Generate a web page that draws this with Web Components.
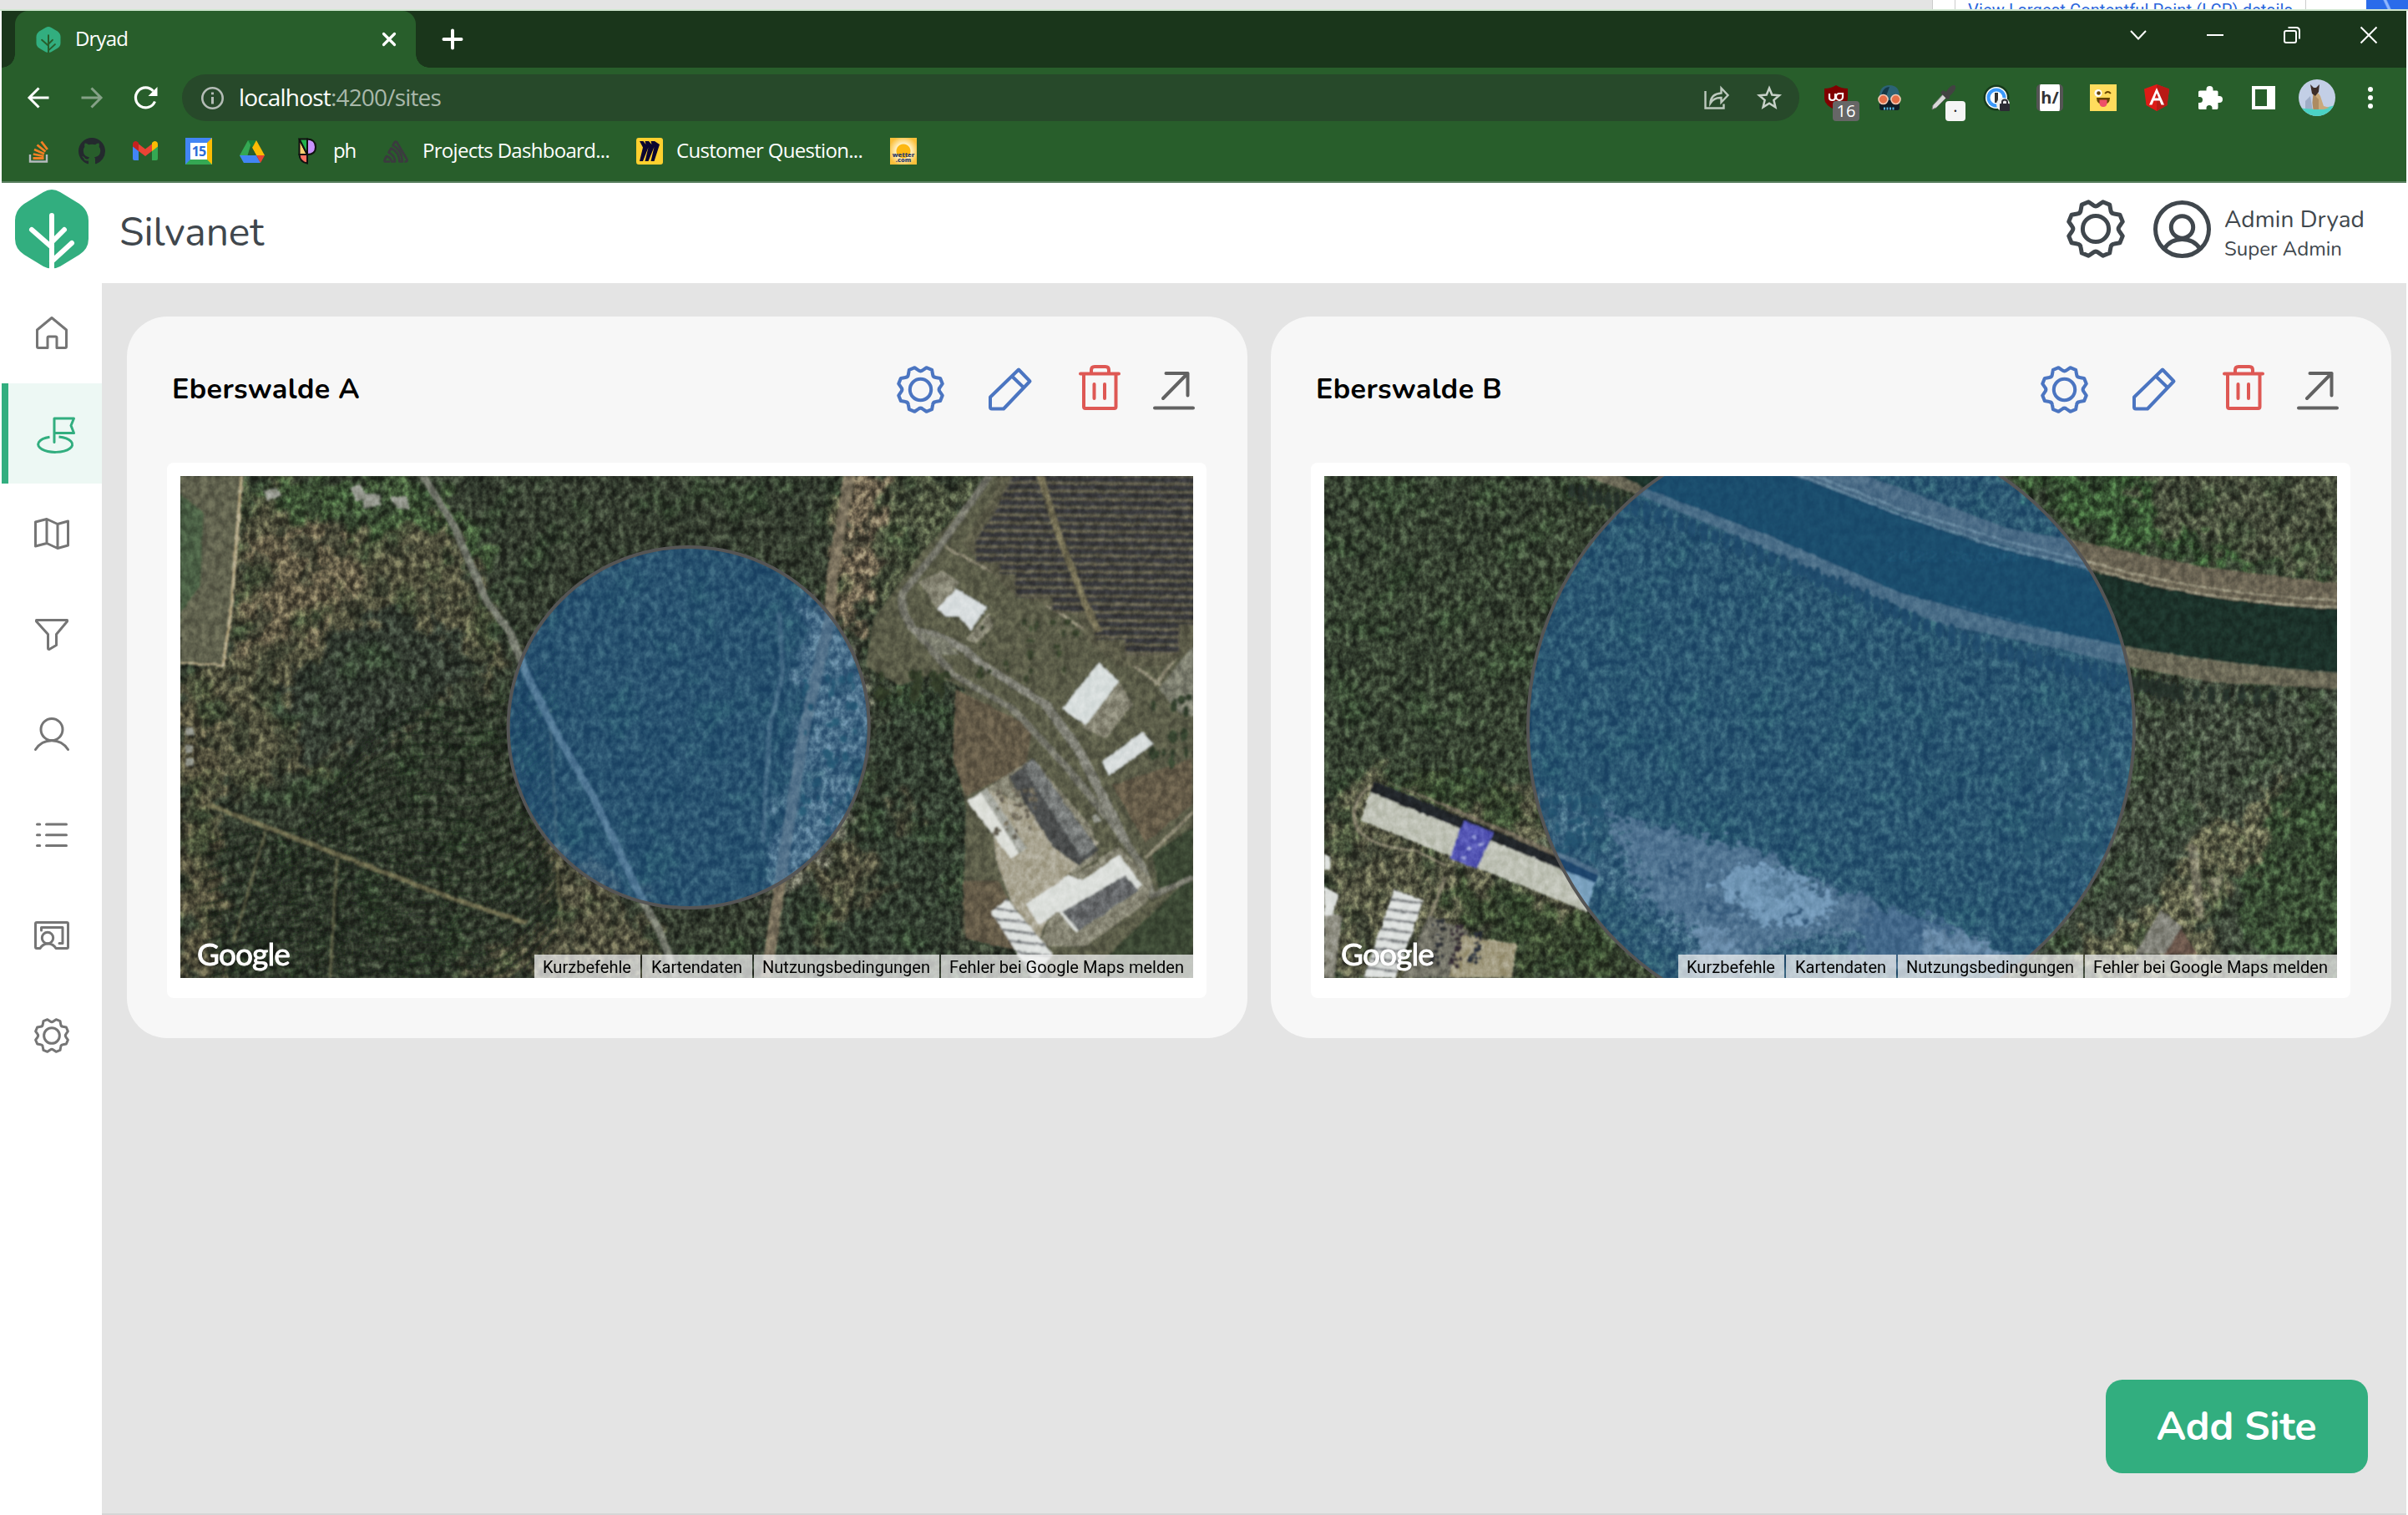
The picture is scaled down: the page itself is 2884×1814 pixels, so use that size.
<!DOCTYPE html>
<html lang="de">
<head>
<meta charset="utf-8">
<title>Dryad</title>
<style>
html,body{margin:0;height:100%;background:#fff;overflow:hidden}
body{font-family:"Open Sans","Noto Sans",sans-serif}
</style>
</head>
<body>
<app-window></app-window>
<script>
const define = (name, html, extra) => customElements.define(name, class extends HTMLElement {
  connectedCallback() {
    if (this.shadowRoot) return;
    const root = this.attachShadow({mode: 'open'});
    root.innerHTML = typeof html === 'function' ? html(this) : html;
    if (extra) extra(this, root);
  }
});

/* ---------- icons ---------- */
const gear = (() => {
  const p = (a, r) => { const t = a * Math.PI / 180; return (35 + r * Math.sin(t)).toFixed(2) + ' ' + (35 - r * Math.cos(t)).toFixed(2); };
  let d = '';
  for (let k = 0; k < 8; k++) {
    const a = 45 * k;
    d += (k ? 'L' : 'M') + p(a - 6, 28.5) + 'Q' + p(a, 26) + ' ' + p(a + 6, 28.5) + 'L' + p(a + 15, 33.4) + 'L' + p(a + 30, 33.4);
  }
  return `<g fill="none" stroke="currentColor" stroke-width="5" stroke-linejoin="round"><path d="${d}Z"/><circle cx="35" cy="35" r="15.6"/></g>`;
})();
const line = (w, s) => `<g fill="none" stroke="currentColor" stroke-width="${w}" stroke-linecap="round" stroke-linejoin="round">${s}</g>`;
const tree = c => `<path fill="#32ae7f" d="M34 3Q44-3 54 3L77 17Q88 25 88 37V59Q88 71 77 78L54 92Q44 97 34 92L11 78Q0 71 0 59V37Q0 25 11 17Z"/><g stroke="${c}" stroke-width="6" stroke-linecap="round" fill="none"><path d="M44 31V98M20 48L44 69M59 48L44 63M68 64L44 86"/></g>`;
const ICONS = {
  gear: [70, 70, gear],
  logo: [88, 94, tree('#fff')],
  favicon: [88, 94, tree('#285e2b')],
  home: [38, 39, line(3, '<path d="M1.5 16L19 1.5L36.5 16V36Q36.5 37.5 35 37.5H25V25.5Q25 24 23.500 24H15.500Q14 24 14 25.500V37.500H3Q1.500 37.500 1.500 36Z"/>')],
  flag: [46, 44, line(3, '<path d="M21 30.500V2H44.500L41 10.500L44.500 19.500H21"/><path stroke-linecap="butt" d="M15.500 24.300A20.500 9.300 0 1 0 26.500 24"/>')],
  map: [42, 38, line(3, '<path d="M1.500 5L15 1.500L28 7.500L40.500 4V33L28 36.500L15 30.500L1.500 34Z M15 1.500V30.500M28 7.500V36.500"/>')],
  filter: [40, 38, line(3, '<path d="M1.500 1.500H38.500V3L25.500 18.500V31.500L17 36.500Q15.500 36.500 15.500 35V18.500L1.500 3Z"/>')],
  user: [42, 40, line(3, '<circle cx="21" cy="14.500" r="13"/><path d="M1.500 38.500A23 23 0 0 1 40.500 38.500"/>')],
  list: [38, 30, line(3, '<path d="M1.500 2h3.200M12.500 2H36.500M1.500 14.700h3.200M12.500 14.700H36.500M1.500 27.400h3.200M12.500 27.400H36.500"/>')],
  board: [42, 34, line(3, '<path d="M7 32.500H3Q1.500 32.500 1.500 31V3Q1.500 1.500 3 1.500H39Q40.500 1.500 40.500 3V31Q40.500 32.500 39 32.500H26A11 11 0 0 0 7 32.500M8.500 11V7.500H34V26.500H30"/><circle cx="16" cy="20" r="6.700"/>')],
  account: [69, 69, line(5, '<circle cx="34.500" cy="34.500" r="32"/><circle cx="34.500" cy="32" r="13.200"/><path d="M13 58A26 26 0 0 1 56 58"/>')],
  pencil: [52, 52, line(4, '<path d="M2 35.500L36 2.500L49.500 16.500L18 49.500H4Q2 49.500 2 47.500ZM28 10.500L41.500 23.500"/>')],
  trash: [50, 54, line(4, '<path d="M2 10.500H48M15 10V6Q15 2 19 2H32Q36 2 36 6V10M6 11V50Q6 52 8 52H42.500Q44.500 52 44.500 50V11M18.500 23V40M31 23V40"/>')],
  open: [50, 46, line(4, '<path d="M2 43.500H48M12 32L41.500 2M15.500 2H41.500V28.500"/>')],
  close: [16, 16, '<path d="M1.500 1.500L14.500 14.500M14.500 1.500L1.500 14.500" stroke="#fff" stroke-width="3.200" stroke-linecap="round"/>'],
  plus: [24, 24, '<path d="M12 1.500V22.500M1.500 12H22.500" stroke="#fff" stroke-width="4" stroke-linecap="round"/>'],
  chevron: [20, 12, '<path d="M1 1L10 10.500L19 1" stroke="#fff" stroke-width="2" fill="none"/>'],
  min: [20, 20, '<path d="M0 10H20" stroke="#fff" stroke-width="2"/>'],
  restore: [20, 20, '<g stroke="#fff" stroke-width="2" fill="none"><rect x="1" y="5" width="14" height="14" rx="2"/><path d="M5.500 1H15Q19 1 19 5V14.500"/></g>'],
  xwin: [20, 20, '<path d="M.5 .5L19.500 19.500M19.500 .5L.5 19.500" stroke="#fff" stroke-width="2"/>'],
  back: [26, 26, '<path d="M25.500 13H2M13.500 1.500L2 13L13.500 24.500" stroke="#fff" stroke-width="3" fill="none"/>'],
  fwd: [26, 26, '<path d="M.5 13H24M12.500 1.500L24 13L12.500 24.500" stroke="#85a187" stroke-width="3" fill="none"/>'],
  reload: [28, 28, '<path d="M24.500 18.500A12 12 0 1 1 22.500 6" stroke="#fff" stroke-width="3.200" fill="none"/><path d="M27.500 1V12H16.500Z" fill="#fff"/>'],
  info: [27, 27, '<circle cx="13.500" cy="13.500" r="12.200" stroke="#b4bcb6" stroke-width="2.600" fill="none"/><path d="M13.500 12V20.500M13.500 6.500V9.300" stroke="#b4bcb6" stroke-width="3"/>'],
  share: [30, 28, '<g fill="none" stroke="#bdc9be" stroke-width="2.400"><path d="M1.500 6V26.500H23.500V21.500"/><path d="M7.500 20.500Q8 9.500 20.500 8.500V2.500L28.500 11L20.500 19.500V14Q12 13.500 7.500 20.500Z"/></g>'],
  star: [28, 28, '<path d="M14 2.500L17.300 10.500L26 11.200L19.400 16.900L21.400 25.300L14 20.800L6.600 25.300L8.600 16.900L2 11.200L10.700 10.500Z" fill="none" stroke="#c7d1c8" stroke-width="2.500"/>'],
  dots: [6, 28, '<g fill="#fff"><circle cx="3" cy="4" r="3"/><circle cx="3" cy="14" r="3"/><circle cx="3" cy="24" r="3"/></g>'],
  so: [32, 32, '<path d="M2 20V28.500H22V20" fill="none" stroke="#b5babd" stroke-width="2.400"/><g stroke="#f48024" stroke-width="2.800"><path d="M5.500 24.500H18.500M5.800 19.500L18.500 22M7 14L19 19.200M10.500 8.500L20.500 16.500M15.500 4.500L22.800 14"/></g>'],
  github: [16, 16, '<path fill="#24292e" d="M8 0C3.580 0 0 3.580 0 8c0 3.540 2.290 6.530 5.470 7.590.4.070.55-.17.55-.38 0-.19-.01-.82-.01-1.490-2.010.37-2.530-.49-2.690-.94-.09-.23-.48-.94-.82-1.130-.28-.15-.68-.52-.01-.53.63-.01 1.080.58 1.230.82.72 1.210 1.870.87 2.330.66.07-.52.28-.87.51-1.070-1.780-.2-3.640-.89-3.640-3.950 0-.87.31-1.590.82-2.150-.08-.2-.36-1.020.08-2.120 0 0 .67-.21 2.200.82.64-.18 1.320-.27 2-.27s1.360.09 2 .27c1.530-1.040 2.200-.82 2.200-.82.44 1.100.16 1.920.08 2.120.51.56.82 1.270.82 2.150 0 3.070-1.870 3.750-3.650 3.950.29.25.54.73.54 1.480 0 1.070-.01 1.930-.01 2.200 0 .21.15.46.55.38A8.010 8.010 0 0 0 16 8c0-4.420-3.580-8-8-8z"/>'],
  gmail: [30, 24, '<path fill="#4285f4" d="M0 5V21Q0 23 2 23H7V10Z"/><path fill="#34a853" d="M30 5V21Q30 23 28 23H23V10Z"/><path fill="#ea4335" d="M6.500 3L15 9.500L23.500 3V11.500L15 18L6.500 11.500Z"/><path fill="#c5221f" d="M0 4Q0 0 4 0Q5.500 .5 7 2V12L0 6.500Z"/><path fill="#fbbc04" d="M30 4Q30 0 26 0Q24.500 .5 23 2V12L30 6.500Z"/>'],
  drive: [30, 27, '<path fill="#34a853" d="M10 0H15L9.500 18L5 27L0 18Z"/><path fill="#188038" d="M10 0H20L15 9Z"/><path fill="#fbbc04" d="M20 0L30 18H20L15 9Z"/><path fill="#4285f4" d="M0 18H20L25 27H5Z"/><path fill="#ea4335" d="M20 18H30L25 27Z"/><path fill="#285e2b" d="M15 9L20 18H10Z"/>'],
  ph: [22, 32, '<g stroke="#111" stroke-width="2"><path fill="#ffd072" d="M1.500 1.500V20H11Z"/><path fill="#22b14c" d="M1.500 1.500H11V20Z"/><path fill="#c893fd" d="M11 1.500Q21 2 21 11T11 20Z"/><path fill="#ff7262" d="M1.500 20H11V30.500Q2 29 1.500 20Z"/></g>'],
  sentry: [30, 27, '<g fill="none" stroke="#3b3a3f" stroke-width="2.600" stroke-linejoin="round"><path d="M8 25.500H2Q1 24.500 2 22.500L4 19Q9.500 21 10 25.500H14Q14 18 6.500 14.500L9.500 9.500Q19 14 19.500 25.500H23Q22 11 11.500 6L13.500 2.500Q15 1 16.500 2.500L28.500 23Q29 25.500 27 25.500H25.500"/></g>'],
  miro: [32, 32, '<rect width="32" height="32" rx="3" fill="#ffd02f"/><path fill="#0b0530" d="M4 4H8.500L11.500 8L10.500 4H15L18.500 8L17.500 4H22L28 8L21.500 28H17.500L21.500 11L14.500 28H10.500L14.500 11.500L8 28H4L8 11.500Z"/>'],
  onepw: [32, 32, '<circle cx="16" cy="16" r="15.500" fill="#173b1c"/><circle cx="16" cy="16" r="13" fill="#fff"/><circle cx="16" cy="16" r="9.500" fill="none" stroke="#3b99fc" stroke-width="4"/><rect x="14" y="10" width="4" height="12" fill="#333"/><circle cx="24" cy="24" r="8" fill="#eee"/><rect x="20" y="23" width="12" height="9" rx="1" fill="#2b2b33"/><path d="M23 23V21Q23 18.500 26 18.500T29 21V23" fill="none" stroke="#2b2b33" stroke-width="2"/>'],
  goggles: [32, 32, '<path d="M4 15Q4 1 16 1T28 15V20H4Z" fill="#2c6375"/><path d="M7 10Q10 3 16 3L12 14H6Z" fill="#153947"/><rect x="4" y="19" width="24" height="12" rx="3" fill="#101c28"/><path d="M9 29h14" stroke="#57b6df" stroke-width="3" stroke-dasharray="2 1.500"/><g fill="#e56f48" stroke="#f3c9b4" stroke-width="1.600"><circle cx="8.500" cy="18" r="5.500"/><circle cx="23.500" cy="18" r="5.500"/></g>'],
  picker: [32, 32, '<path d="M4 25L18 10L22 14L8 28L3 30Z" fill="#d8d8d8" stroke="#777"/><path d="M16 7L20 9Q25 0 30 1Q34 5 24 14L24 17L21 18L13 10Z" fill="#424242"/>'],
  angular: [32, 32, '<path d="M16 0L31 5.500L28.500 25L16 32L3.500 25L1 5.500Z" fill="#dd1b16"/><path d="M16 0V32L28.500 25L31 5.500Z" fill="#b81a15"/><path d="M16 4L7 24.500H10.500L12.500 19.500H19.500L21.500 24.500H25ZM16 10.500L18.400 16.500H13.600Z" fill="#fff" fill-rule="evenodd"/>'],
  puzzle: [30, 30, '<path fill="#fff" d="M10.500 5A4 4 0 0 1 18.500 5V6.500H23Q24.500 6.500 24.500 8V13H26A4 4 0 0 1 26 21H24.500V27Q24.500 29 23 29H17.500V27.500A3.500 3.500 0 0 0 10.500 27.500V29H3Q1 29 1 27.500V21H2.500A3.500 3.500 0 0 0 2.500 14H1V8Q1 6.500 3 6.500H10.500Z"/>'],
  panel: [28, 28, '<path fill="#fff" fill-rule="evenodd" d="M0 0H28V28H0ZM4 4V24H18V4Z"/>'],
  wink: [32, 32, '<rect width="32" height="32" fill="#ffdc5d"/><circle cx="10" cy="10.500" r="4.500" fill="#fff"/><circle cx="10.500" cy="10.500" r="2.300" fill="#664500"/><path d="M18 11Q21.500 7 25 11" fill="none" stroke="#664500" stroke-width="1.800"/><path d="M8 16H24Q24 24 16 24T8 16Z" fill="#664500"/><path d="M11.500 18.500H20.500V23Q20 27 16 27T11.500 23Z" fill="#ee4e68"/>'],
  dog: [44, 44, '<defs><clipPath id="c"><circle cx="22" cy="22" r="22"/></clipPath></defs><g clip-path="url(#c)"><rect width="44" height="44" fill="#c3cfe6"/><path d="M8 44V26L14 20L18 44Z" fill="#9eacc6"/><path d="M0 34Q20 38 44 31V44H0Z" fill="#4bd2c5"/><path d="M17 14Q23 14 26 20L30 32L37 34L30 36H17Z" fill="#c9a97b"/><path d="M18 18Q15 28 18 36H24V24Z" fill="#ad8b61"/><path d="M14 6L18 10H21L25 6L24 15L20 20L16 17Z" fill="#3d2d28"/></g>'],
};
define('ui-icon', h => {
  const [w, ht, s] = ICONS[h.getAttribute('name')];
  const width = +(h.getAttribute('w') || w), height = +(h.getAttribute('h') || ht * width / w);
  return `<style>:host{display:block;flex:none;width:${width}px;height:${height}px}svg{display:block;overflow:visible}</style>
  <svg width="${width}" height="${height}" viewBox="0 0 ${w} ${ht}">${s}</svg>`;
});

/* ---------- browser chrome ---------- */
define('tab-strip', `<style>
:host{display:flex;height:68px;background:#1a361b;color:#fff}
.tab{position:relative;display:flex;align-items:center;box-sizing:border-box;width:480px;height:68px;margin-left:16px;padding:0 24px 0 25px;background:#285e2b;border-radius:16px 16px 0 0;font-size:24px}
.tab:before,.tab:after{content:"";position:absolute;bottom:0;width:16px;height:16px;background:radial-gradient(circle at 0 0,transparent 15.500px,#285e2b 16px)}
.tab:before{left:-16px}.tab:after{right:-16px;transform:scaleX(-1)}
fit-text{margin:-2px auto 0 18px;line-height:34px}
.new{margin:22px auto 0 32px}
.win{display:flex;align-items:center;gap:72px;height:58px;margin-right:35px}
</style><div class="tab"><ui-icon name="favicon" w="30" h="31"></ui-icon><fit-text w="62">Dryad</fit-text><ui-icon name="close"></ui-icon></div>
<ui-icon class="new" name="plus"></ui-icon>
<div class="win"><ui-icon name="chevron"></ui-icon><ui-icon name="min"></ui-icon><ui-icon name="restore"></ui-icon><ui-icon name="xwin"></ui-icon></div>`);

define('ext-button', `<style>
:host{position:relative;display:flex;align-items:center;justify-content:center;width:32px;height:32px;flex:none}
</style><slot></slot>`);

define('address-bar', `<style>
:host{display:flex;align-items:center;height:56px;color:#fff;padding:0 0 0 31px;margin-top:8px}
.nav{display:flex;gap:38px;align-items:center;width:185px;flex:none}
.omni{display:flex;flex:none;align-items:center;box-sizing:border-box;width:1937px;height:56px;border-radius:28px;background:#27492a;padding:0 22px 0 23px;font-size:28px}
.omni fit-text{margin:-2px auto 0 19px;line-height:40px}
.dim{color:#a9b8aa}
.omni ui-icon+ui-icon{margin-left:34px}
.ext{display:flex;flex:none;align-items:center;gap:32px;margin-left:28px}
.badge{position:absolute;left:12px;top:20px;width:32px;height:24px;border-radius:4px;background:#666;color:#fff;font-size:20px;line-height:24px;text-align:center}
.badge.w{left:19px;width:24px;background:#f5f5f5;color:#222}
.ub{width:28px;height:30px;display:block}
.hy{box-sizing:border-box;width:32px;height:32px;border:solid #555;border-width:0 4px;border-radius:5px;background:#fff;color:#333;font-weight:700;font-size:20px;line-height:31px;text-align:center}
.av{margin:0 7px 0 -6px}
</style>
<div class="nav"><ui-icon name="back"></ui-icon><ui-icon name="fwd"></ui-icon><ui-icon name="reload"></ui-icon></div>
<div class="omni"><ui-icon name="info"></ui-icon><fit-text w="241">localhost<span class="dim">:4200/sites</span></fit-text><ui-icon name="share"></ui-icon><ui-icon name="star"></ui-icon></div>
<div class="ext">
<ext-button><svg class="ub" viewBox="0 0 28 30"><path d="M14 0Q20 4 28 4V16Q28 24 14 30Q0 24 0 16V4Q8 4 14 0Z" fill="#800000"/><path d="M6 10V15Q6 18 9.500 18T13 15V10M22 14A4 4 0 1 1 18 10H22Z" fill="none" stroke="#fff" stroke-width="2.200"/></svg><span class="badge">16</span></ext-button>
<ext-button><ui-icon name="goggles"></ui-icon></ext-button>
<ext-button><ui-icon name="picker"></ui-icon><span class="badge w">·</span></ext-button>
<ext-button><ui-icon name="onepw"></ui-icon></ext-button>
<ext-button><span class="hy">h/</span></ext-button>
<ext-button><ui-icon name="wink"></ui-icon></ext-button>
<ext-button><ui-icon name="angular"></ui-icon></ext-button>
<ext-button><ui-icon name="puzzle"></ui-icon></ext-button>
<ext-button><ui-icon name="panel"></ui-icon></ext-button>
<ui-icon class="av" name="dog"></ui-icon><ui-icon name="dots"></ui-icon>
</div>`);

define('bookmark-bar', `<style>
:host{display:flex;align-items:center;height:32px;margin-top:20px;padding-left:32px;color:#fff;font-size:24px}
fit-text{margin-top:-2px;line-height:34px}
.cal{box-sizing:border-box;width:32px;height:32px;border:6px solid;border-color:#4285f4 #fbbc04 #34a853 #4285f4;background:#fff;color:#2b6cd8;font-size:16px;font-weight:700;line-height:20px;text-align:center;letter-spacing:-1px}
.wet{width:32px;height:32px;box-sizing:border-box;padding-top:17px;background:radial-gradient(circle at 50% 50%,#fdb813 0 8px,#fff1c4 9px,#fbbf3a 18px);color:#34436b;font-size:7.500px;font-weight:800;line-height:6px;text-align:center}
</style>
<ui-icon name="so"></ui-icon>
<ui-icon name="github" w="32" style="margin-left:28px"></ui-icon>
<ui-icon name="gmail" style="margin-left:33px"></ui-icon>
<div class="cal" style="margin-left:33px">15</div>
<ui-icon name="drive" style="margin-left:33px"></ui-icon>
<ui-icon name="ph" style="margin-left:40px"></ui-icon><fit-text w="26" style="margin-left:21px">ph</fit-text>
<ui-icon name="sentry" style="margin-left:33px"></ui-icon><fit-text w="223" style="margin-left:18px">Projects Dashboard...</fit-text>
<ui-icon name="miro" style="margin-left:32px"></ui-icon><fit-text w="222" style="margin-left:17px">Customer Question...</fit-text>
<div class="wet" style="margin-left:33px">wetter<br>.com</div>`);

/* ---------- application ---------- */
define('app-header', `<style>
:host{display:flex;align-items:center;height:120px;box-sizing:border-box;background:#fff;color:#40474d;font-family:Nunito,Lato,sans-serif;padding:0 53px 0 16px}
.t{font-size:48px;line-height:60px;margin:-2px auto 0 38px}
.logo{margin-top:-10px}
.acc{margin:-10px 17px 0 34px}
.g{margin-top:-10px}
.who{display:flex;flex-direction:column;width:166px;margin-top:2px}
.n{font-size:28px;line-height:36px}.r{font-size:24px;line-height:34px}
</style><ui-icon class="logo" name="logo"></ui-icon><fit-text class="t" w="172">Silvanet</fit-text>
<ui-icon class="g" name="gear"></ui-icon><ui-icon class="acc" name="account"></ui-icon>
<div class="who"><fit-text class="n" w="167">Admin Dryad</fit-text><fit-text class="r" w="140">Super Admin</fit-text></div>`);

define('nav-item', h => `<style>
:host{display:flex;align-items:center;justify-content:center;box-sizing:border-box;height:120px;color:#757575;padding-bottom:1px}
:host([low]){padding:2px 0 0}
:host([active]){background:#edf8f4;color:#32ae7f;border-left:8px solid #32ae7f;padding:4px 0 0 2px}
</style><ui-icon name="${h.getAttribute('icon')}" w="${h.getAttribute('w')}"></ui-icon>`);

define('side-nav', `<style>:host{display:flex;flex-direction:column;width:120px;background:#fff;flex:none}</style>
<nav-item icon="home" w="38"></nav-item><nav-item icon="flag" w="46" active></nav-item><nav-item icon="map" w="42"></nav-item><nav-item icon="filter" w="40" low></nav-item><nav-item icon="user" w="42"></nav-item><nav-item icon="list" w="38" low></nav-item><nav-item icon="board" w="42" low></nav-item><nav-item icon="gear" w="42" low></nav-item>`);

/* Aerial scenes are authored in stretched units and scaled into a 1213x601 view. */
const DEFS = `<defs>
<filter id="fine" x="0" y="0" width="100%" height="100%" color-interpolation-filters="sRGB"><feTurbulence type="fractalNoise" baseFrequency=".12 .1" numOctaves="3" seed="4"/><feColorMatrix values="1.9 0 0 0 -.5  1.9 0 0 0 -.49  1.9 0 0 0 -.49  0 0 0 0 1"/></filter>
<filter id="coarse" x="0" y="0" width="100%" height="100%" color-interpolation-filters="sRGB"><feTurbulence type="fractalNoise" baseFrequency=".035 .03" numOctaves="5" seed="9"/><feColorMatrix values="0 0 0 0 .15  0 0 0 0 .18  0 0 0 0 .14  7 0 0 0 -3.600"/></filter>
<filter id="green" x="0" y="0" width="100%" height="100%" color-interpolation-filters="sRGB"><feTurbulence type="fractalNoise" baseFrequency=".02" numOctaves="5" seed="22"/><feColorMatrix values="0 0 0 0 .22  0 0 0 0 .33  0 0 0 0 .2  0 5 0 0 -2.800"/></filter>
<filter id="rough" x="-5%" y="-5%" width="110%" height="110%"><feTurbulence type="fractalNoise" baseFrequency=".04" numOctaves="5" seed="2"/><feDisplacementMap in="SourceGraphic" scale="80" xChannelSelector="R" yChannelSelector="G"/><feGaussianBlur stdDeviation="2"/></filter>
<filter id="edge" x="-5%" y="-5%" width="110%" height="110%"><feTurbulence type="fractalNoise" baseFrequency=".09" numOctaves="2" seed="7"/><feDisplacementMap in="SourceGraphic" scale="3" xChannelSelector="R" yChannelSelector="G"/><feGaussianBlur stdDeviation=".8"/></filter>
<filter id="crumble" x="-5%" y="-5%" width="110%" height="110%"><feTurbulence type="fractalNoise" baseFrequency=".06" numOctaves="4" seed="12"/><feDisplacementMap in="SourceGraphic" scale="80" xChannelSelector="R" yChannelSelector="G"/><feGaussianBlur stdDeviation="1"/></filter>
<pattern id="pv" width="400" height="21" patternUnits="userSpaceOnUse" patternTransform="rotate(1)"><rect width="400" height="21" fill="#66624f"/><rect width="400" height="14" fill="#38393b"/></pattern>
<pattern id="hall" width="40" height="26" patternUnits="userSpaceOnUse" patternTransform="rotate(12)"><rect width="40" height="26" fill="#e0e3e1"/><rect width="40" height="7" fill="#85888a"/></pattern>
</defs>`;
const rows = () => { let s = ''; for (let i = 0; i < 24; i++) { const y = 560 + i * 32; s += `<path d="M${Math.max(90, 270 - i * 14)} ${y + 240}Q${330} ${y + 60} ${420} ${y + 90}T${585} ${y - 60}"/>`; } return s; };
const rows2 = () => { let s = ''; for (let i = 0; i < 13; i++) { const y = 980 + i * 32; s += `<path d="M60 ${y + 20}Q170 ${y - 40} 260 ${y + 10}T430 ${y + 40}"/>`; } return s; };
const dots = (n, x0, y0, w, h, c, rx, ry) => { let s = '', r = 17; const f = () => (r = (r * 16807) % 2147483647) / 2147483647; f(); f(); for (let i = 0; i < n; i++) s += `<ellipse cx="${(x0 + f() * w).toFixed()}" cy="${(y0 + f() * h).toFixed()}" rx="${(rx * (.6 + f())).toFixed(1)}" ry="${(ry * (.6 + f())).toFixed(1)}"/>`; return `<g fill="${c}">${s}</g>`; };
const tex = (f, o, m) => `<rect width="1213" height="601" filter="url(#${f})" opacity="${o}" style="mix-blend-mode:${m || 'normal'}"/>`;

const SCENES = {
a: {ox: 20, r: 216, cx: 608.700,
  land: `<rect x="-50" y="-50" width="1700" height="1500" fill="#374132"/>
  <path fill="#575541" d="M110 44H385L480 370L510 560L430 600L330 760L120 860L20 900V550L85 545Z"/>
  <path fill="#384134" d="M250 470L350 390L450 480L490 560L400 620L330 760L200 790L170 600Z"/>
  <path fill="#675e49" d="M130 200L260 190L290 330L240 450L110 500Z"/>
  <path fill="#425839" d="M120 60L180 150L280 190L420 170L470 300L500 250L390 44H250Z"/>
  <path fill="#54513e" d="M20 600H75L80 1352H20Z"/>
  <path fill="#545240" d="M560 950L700 1150L760 1352H420L590 1200Z"/>
  <path fill="#6f6f60" d="M960 360L1000 420L1060 600L1010 980L900 1180L925 900L960 660Z"/>
  <path fill="#756853" d="M1015 44H1090L1060 350L1030 440L990 380Z"/>
  <path fill="#50573f" d="M1085 44H1240L1140 300L1060 420Z"/>
  <path fill="#354030" d="M1060 720L1120 600L1190 590L1180 760L1200 900L1190 1352H880L950 1100L1050 950Z"/>
  <path fill="#55523f" d="M960 1050L1040 1000L1080 1100L1000 1250ZM1080 900L1120 880L1130 1000Z"/>`,
  built: `<g filter="url(#edge)"><path fill="#5b5d48" d="M1240 44H1600V1400H1380L1330 1352L1250 1180L1195 1240L1200 900L1180 760L1200 600L1150 560L1100 590L1050 540L1060 420L1130 250Z"/>
  <path fill="#665b48" d="M1185 600L1300 700L1290 800L1200 880L1180 780ZM1195 1100H1250L1300 1290L1200 1250ZM1420 850L1540 780V900L1470 1000Z"/>
  <path fill="#3d4935" d="M1440 1250L1542 1080V1352H1380ZM1480 1030L1542 960V1110L1490 1120Z"/></g>
  <path fill="#62644f" d="M20 44H112L96 400L84 545L20 535Z"/><path fill="#436040" opacity=".7" d="M20 90L55 140L50 330L20 400Z"/>
  <g fill="none" stroke-linejoin="round"><g stroke="#1b251a" opacity=".7" stroke-width="6">${rows()}${rows2()}</g>
  <g stroke="#b9ad8c" stroke-width="5"><path d="M112 44L96 400L84 540M20 532Q60 532 84 540"/></g>
  <g stroke="#6f6d50" stroke-width="6"><path d="M60 900L180 980L300 1060L420 1140L540 1210" stroke-width="11"/><path opacity=".7" d="M150 960L100 1260M255 1040L245 1352M575 650L590 1180" stroke-width="4"/></g>
  <path stroke="#787b70" stroke-width="12" d="M385 44L430 170L480 370L515 450L540 560L580 700L640 880L700 1100L745 1250L765 1352"/>
  <path stroke="#7d735e" stroke-width="17" d="M1025 44L1000 300L995 420L958 700L930 1000L900 1352"/>
  <path stroke="#737362" stroke-width="7" opacity=".7" d="M920 400L925 560L905 700L895 1000"/>
  <path stroke="#77776c" stroke-width="12" d="M1235 44L1160 230L1105 350Q1100 400 1125 450L1180 560L1270 650L1350 800L1420 950L1465 1060L1480 1140L1542 1090"/>
  <path stroke="#86867c" stroke-width="15" d="M1120 445Q1180 460 1220 530L1320 640L1370 760L1400 860L1440 1000"/>
  <path stroke="#928d78" stroke-width="6" d="M1170 230L1280 330L1400 470L1500 600M1550 430L1485 590M1542 920L1470 1040"/>
  </g>
  <path fill="#7e7f70" d="M1490 600L1560 440V680L1520 660ZM1130 450L1170 470L1190 510L1160 510Z"/>
  <path fill="#5d5b4a" d="M1250 44H1560V470L1500 540H1430L1380 470L1370 410L1270 350L1195 220L1240 100Z"/>
  <path fill="url(#pv)" d="M1270 44H1560V430L1520 430V510H1440V470H1395V400H1330V360H1275V300H1250V270H1215V210L1240 150Z"/>
  <path fill="none" stroke="#777156" stroke-width="10" d="M1312 44L1340 200L1380 380L1400 450"/>
  <path fill="#888674" d="M1130 320L1165 290L1190 320L1160 400ZM1200 470L1235 400L1240 440L1215 480ZM1395 640L1430 580L1450 640L1410 730L1375 700ZM1230 860L1300 780L1390 960L1400 1050L1350 1090L1310 1270H1380L1470 1160L1480 1100L1430 1010L1350 1090L1290 1180L1250 1040Z"/>
  <path fill="#aaa592" d="M1235 860L1400 1000L1350 1090L1310 1250L1270 1160L1245 1040Z"/>
  <path fill="#4d5050" d="M1265 830L1300 780L1400 1020L1370 1060L1330 1010Z"/>
  <path fill="#777a79" d="M1285 800L1303 782L1395 1010L1375 1040Z"/>
  <path fill="#dee0da" d="M1202 890L1232 858L1292 1015L1268 1042Z"/>
  <path fill="#a5a79f" d="M1222 868L1232 858L1292 1015L1280 1028Z"/>
  <path fill="#dcdfdb" d="M1290 1160L1355 1085L1375 1100L1430 1032L1465 1110L1365 1235L1340 1180L1310 1215Z"/>
  <path fill="#686b6c" d="M1345 1180L1440 1085L1460 1125L1370 1230Z"/>
  <path fill="url(#hall)" d="M1238 1180L1262 1146L1330 1290L1310 1352H1300Z"/>
  <path fill="#d8dedd" d="M1345 650L1400 530L1430 580L1380 695Z"/>
  <path fill="#d8dddd" d="M1405 790L1465 712L1482 742L1415 825Z"/>
  <path fill="#d9dedf" d="M1157 390L1185 338L1232 385L1208 445L1190 410L1170 410Z"/>
  <path fill="#9a9c93" d="M275 75L290 65L300 100L285 110ZM295 90H320L322 120L295 128ZM335 100L360 96L365 130L345 128ZM145 80L165 75L172 95L150 110ZM28 700H40V720H28ZM28 745H38V765H28ZM28 780H40V800H28ZM1390 930L1398 925L1403 945L1395 950Z"/>
  ${dots(36, 955, 560, 80, 400, '#33483a', 4, 9)}${dots(26, 1220, 420, 150, 160, '#3a442f', 4, 7)}${dots(20, 1070, 560, 110, 60, '#35402c', 6, 12)}${dots(14, 1480, 620, 60, 180, '#35422f', 5, 12)}${dots(36, 1245, 860, 60, 130, '#6e685a', 3, 5)}`},
b: {ox: 33, r: 363, cx: 607,
  land: `<rect x="-50" y="-50" width="1750" height="1500" fill="#3b4635"/>
  <path fill="#3b5a35" d="M1050 20H1600V330L1350 280L1200 220Z"/><path fill="#4d5340" d="M1280 20H1600V320L1480 300L1290 190L1250 100Z"/>
  <path fill="#445040" d="M1245 540L1600 600V1400H1050L1180 1100Z"/>
  <path fill="#68674f" d="M1360 930L1420 940L1460 830H1480L1440 1040L1390 1130L1350 1200L1400 1352H1100L1280 1160Z"/>
  <path fill="#3a5034" d="M1480 850L1600 800V1352H1450L1400 1180Z"/>
  <path fill="#5c5b47" d="M33 900L110 820L350 850L370 990L440 1090L420 1200L500 1352H33Z"/>
  <path fill="#3c4b32" d="M120 830L260 810L340 900L330 980L180 880ZM220 1090L430 1180L510 1352H320L260 1230L210 1160Z"/>
  <path fill="#5b6351" d="M350 840L450 930L600 1000L800 1130L1000 1220L1080 1352H560L470 1100L380 1000Z"/>
  <path fill="#424d38" d="M430 1080L600 1352H520L420 1180Z"/>
  <path fill="#4a5542" d="M1100 800L1240 700V950L1150 1050Z"/>`,
  built: `<g filter="url(#crumble)" opacity=".9"><path fill="#7b776c" d="M455 920L560 970L700 1030L790 1120L860 1150L840 1220L700 1270L640 1352H600L580 1220L520 1150Z"/>
  <path fill="#64615c" d="M850 1170L930 1190L1000 1240L1060 1320H820Z"/>
  <path fill="#b9b9b0" d="M640 1070Q700 1050 740 1080L800 1170L770 1210L700 1220L660 1160L625 1120Z"/>
  <path fill="#96958b" d="M680 1080L720 1080L750 1120L740 1150L700 1140Z"/>
  <path fill="#a39d92" d="M580 1210L640 1230L660 1290H590ZM930 1220L1000 1240L1060 1291H940Z"/>
  <path fill="#4f4e48" d="M540 1050L560 1040L575 1090L555 1100ZM600 1150L640 1170L650 1200L610 1190ZM730 1170L750 1180L740 1215Z"/></g>
  <path fill="#6d6b58" d="M380 20L500 90L640 190L780 300L960 430L1150 500L1240 540L1360 580L1560 600V540L1300 500L1150 420L900 280L500 20Z"/>
  <path fill="#1d332c" d="M450 20L520 80L700 200L900 350L1050 420L1240 490Q1400 540 1560 558V390L1400 370L1190 295L1000 210L740 44L700 20Z"/>
  <path fill="#6d6655" d="M700 20L740 44L1000 200L1190 290Q1360 380 1560 390V325L1350 280L1170 215L1060 180L850 44L820 20Z"/>
  <g fill="none"><path stroke="#a39d86" stroke-width="4" d="M735 20L900 130L1050 210L1190 272Q1360 355 1560 368M715 20L890 140L1040 225L1190 288Q1360 376 1560 386"/><path stroke="#75806f" stroke-width="1.500" stroke-dasharray="9 3" d="M980 380L1150 460L1240 490Q1400 540 1560 558"/></g>
  <text x="875" y="266" font-family="Roboto,sans-serif" font-size="36" fill="#2a4a40" opacity=".6">2022 Google</text>
  <g filter="url(#edge)">${(() => { let s = '', p = [[405, 60], [500, 105], [620, 180], [740, 260], [820, 320], [920, 400], [1050, 480], [1150, 520], [1245, 560], [1320, 590], [1480, 600]]; for (let i = 0; i < 10; i++) for (let j = 0; j < 7; j++) { const x = p[i][0] + (p[i + 1][0] - p[i][0]) * j / 7, y = p[i][1] + (p[i + 1][1] - p[i][1]) * j / 7; s += `<ellipse cx="${x}" cy="${y + 22}" rx="6" ry="${18 + (i * 7 + j * 5) % 13}"/>`; } return `<g fill="#26322a">${s}</g>`; })()}</g>
  ${dots(45, 360, 880, 90, 200, '#2f4130', 5, 10)}${dots(60, 1090, 760, 130, 300, '#33412f', 5, 10)}
  <path fill="#a39c88" opacity=".5" d="M1330 1000L1345 1010L1355 1200L1342 1190ZM1360 1100L1385 1080L1375 1150Z"/>
  <path fill="none" stroke="#8b8671" stroke-width="6" d="M105 850Q70 890 80 950T170 1020L215 1060M215 1090L190 1200"/>
  <path fill="#23252a" d="M108 840L445 1080L440 1110L100 880Z"/><path fill="#77705f" d="M112 830L250 925L445 1070L445 1085Z"/>
  <path fill="#bfc2b6" d="M102 868L440 1105L427 1180L88 942Z"/>
  <path fill="#5457b5" d="M243 943L288 973L262 1068L221 1040Z"/><g fill="#9fa4dd"><circle cx="258" cy="985" r="4"/><circle cx="250" cy="1015" r="4"/><circle cx="242" cy="1040" r="4"/><circle cx="268" cy="1005" r="4"/></g>
  <path fill="#8f8e82" d="M33 1180L60 1190L48 1352H33Z"/><path fill="#77766a" d="M190 1190L250 1230L240 1352H150Z"/>
  <path fill="#a39c81" d="M240 1240L322 1265L315 1352H220Z"/>
  <path fill="#dcdfdc" d="M33 1115L55 1135L45 1190H33ZM33 1030L42 1035V1070H33Z"/>
  <path fill="url(#hall)" d="M138 1122L182 1150L140 1352H92Z"/>
  ${dots(26, 195, 1200, 18, 120, '#2e3036', 3, 4)}${dots(30, 224, 1215, 16, 110, '#3a3038', 3, 4)}${dots(22, 252, 1235, 18, 80, '#2c333c', 3, 4)}
  <path fill="#85857c" d="M1250 1291L1290 1175L1322 1220L1300 1291Z"/><path fill="#6b564c" d="M1295 1291L1320 1225L1345 1291Z"/>`}};

define('site-map', h => {
  const s = SCENES[h.getAttribute('scene')];
  return `<style>
:host{position:relative;display:block;width:1213px;height:601px;overflow:hidden;isolation:isolate}
.s{display:block}
.g{position:absolute;left:21px;bottom:5px;color:#fff;font:37px/48px Lato,sans-serif;-webkit-text-stroke:.9px #fff;text-shadow:0 0 4px rgba(0,0,0,.5)}
.bar{position:absolute;right:0;bottom:0;display:flex;gap:2px;height:28px;font:20px/28px Roboto,sans-serif;color:#000}
.bar span{box-sizing:border-box;background:rgba(245,245,245,.72);text-align:center;white-space:nowrap;padding-top:1px}
</style>
<svg class="s" width="1213" height="601" viewBox="0 0 1213 601">${DEFS}
<g style="isolation:isolate"><g filter="url(#rough)"><g transform="scale(.7972 .4591) translate(${-s.ox} -44)">${s.land}</g></g>${tex('coarse', .5)}${tex('green', .35)}${tex('fine', .36, 'overlay')}</g>
<g filter="url(#edge)"><g transform="scale(.7972 .4591) translate(${-s.ox} -44)">${s.built}</g></g>
${tex('fine', .2, 'overlay')}
<circle cx="${s.cx}" cy="301" r="${s.r}" fill="#1976d2" fill-opacity=".4" stroke="#555" stroke-width="4"/></svg>
<div class="g"><fit-text w="110">Google</fit-text></div>
<div class="bar"><span style="width:127px"><fit-text w="105">Kurzbefehle</fit-text></span><span style="width:132px"><fit-text w="108">Kartendaten</fit-text></span><span style="width:222px"><fit-text w="200">Nutzungsbedingungen</fit-text></span><span style="width:302px"><fit-text w="280">Fehler bei Google Maps melden</fit-text></span></div>`;
});

define('site-card', h => `<style>
:host{display:block;box-sizing:border-box;width:1342px;height:864px;background:#f7f7f7;border-radius:48px;padding:0 49px 0 48px}
.head{display:flex;align-items:center;height:175px;padding:0 14px 1px 7px;box-sizing:border-box;font:700 34px/44px Nunito,Lato,sans-serif;color:#000}
.head fit-text{margin:0 auto 0 0}
.blue{color:#4b75c1}.red{color:#de5854}.grey{color:#626262}
.frame{box-sizing:border-box;height:641px;background:#fff;border-radius:8px;padding:16px}
</style><div class="head"><fit-text w="${h.getAttribute('tw')}"><slot></slot></fit-text>
<ui-icon class="blue" name="gear" w="57"></ui-icon><ui-icon class="blue" name="pencil" style="margin-left:53px"></ui-icon><ui-icon class="red" name="trash" style="margin:-4px 0 0 56px"></ui-icon><ui-icon class="grey" name="open" style="margin:4px 0 0 39px"></ui-icon></div>
<div class="frame"><site-map scene="${h.getAttribute('scene')}"></site-map></div>`);

define('app-button', `<style>:host{display:flex;align-items:center;justify-content:center;width:314px;height:112px;border-radius:20px;background:#32ae7f;color:#fff;font:700 48px/60px Nunito,Lato,sans-serif}</style><fit-text w="191"><slot></slot></fit-text>`);

define('app-main', `<style>
:host{display:flex;flex-direction:column;justify-content:space-between;flex:1;box-sizing:border-box;background:#e4e4e4;padding:40px 18px 48px 30px;border-bottom:2px solid #d6d6d6}
.cards{display:flex;gap:28px}
.foot{display:flex;justify-content:flex-end;padding-right:28px}
</style><div class="cards"><site-card scene="a" tw="224">Eberswalde A</site-card><site-card scene="b" tw="222">Eberswalde B</site-card></div>
<div class="foot"><app-button>Add Site</app-button></div>`);

define('desktop-strip', `<style>
:host{display:flex;height:11px;background:#e4e4e4;overflow:hidden;border-bottom:2px solid #cfe6cf}
.p{display:flex;width:520px;margin-left:auto;background:#fff;border-left:1px solid #ccc;box-sizing:border-box;padding-left:26px}
.c{width:421px;box-sizing:border-box;border:solid #ccc;border-width:0 1px;padding-left:16px;color:#2b66dc;font:20px/24px Roboto,sans-serif}
.c fit-text{margin-top:-20px}
.i{width:50px;background:linear-gradient(65deg,#2a6bea 0 45%,#8fb6ff 48% 52%,#2a6bea 55%)}
</style><div class="p"><div class="c"><fit-text w="388">View Largest Contentful Paint (LCP) details</fit-text></div></div><div class="i"></div>`);

define('app-window', `<style>
:host{display:flex;flex-direction:column;width:2884px;height:1814px;background:#fff}
.chrome{box-sizing:border-box;height:206px;margin:0 2px;background:#285e2b;border-bottom:2px solid #5a8060;}
app-header{margin-left:2px}
.body{display:flex;flex:1;padding:0 2px}
</style><desktop-strip></desktop-strip>
<div class="chrome"><tab-strip></tab-strip><address-bar></address-bar><bookmark-bar></bookmark-bar></div>
<app-header></app-header><div class="body"><side-nav></side-nav><app-main></app-main></div>`);

/* Tracks its text so that it fills the width given in "w". */
define('fit-text', `<style>:host{display:inline-block;white-space:nowrap;text-align:left}span{display:inline-block;margin-left:-1px}</style><span><slot></slot></span>`, (h, root) => {
  const s = root.querySelector('span'), w = +h.getAttribute('w');
  h.style.width = w + 'px';
  let t = h.textContent;
  const host = h.getRootNode().host;
  if (!t.trim() && host) t = host.textContent;
  const n = t.trim().length, now = s.getBoundingClientRect().width;
  h.style.letterSpacing = ((w + 1 - now) / n).toFixed(3) + 'px';
});
</script>
</body>
</html>
